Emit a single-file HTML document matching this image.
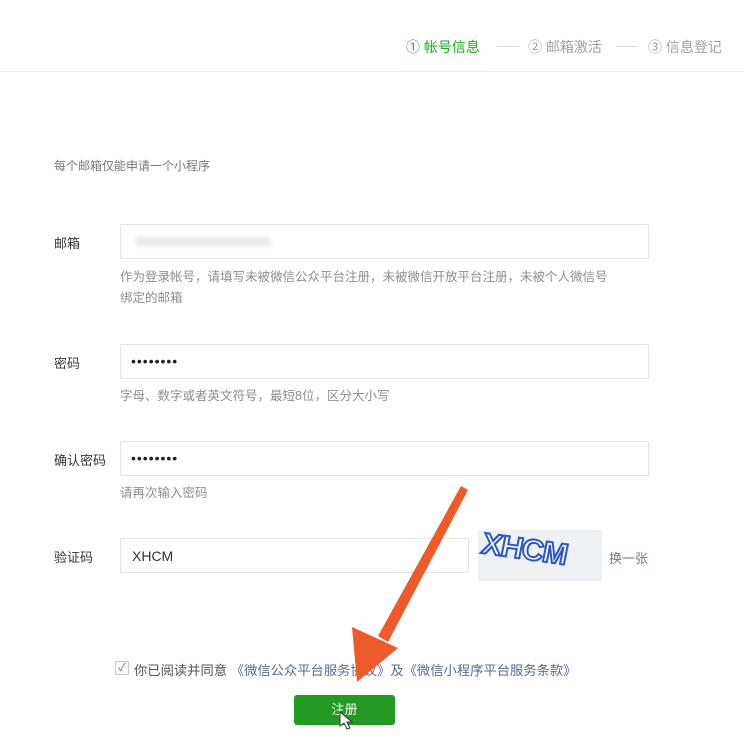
<!DOCTYPE html>
<html><head><meta charset="utf-8"><style>
body{margin:0;width:744px;height:737px;background:#fff;font-family:"Liberation Sans","Noto Sans CJK SC",sans-serif;position:relative;overflow:hidden;color:#353535}
.a{position:absolute;white-space:nowrap}
.lbl{font-size:13px;color:#353535}
.tip{font-size:12px;color:#8d8d8d}
.inp{position:absolute;border:1px solid #e4e4e4;background:#fff;box-sizing:border-box;height:35px;border-radius:2px}
.dots{font-size:14px;letter-spacing:1px;color:#222;position:absolute;left:10px;top:8px}
</style></head><body>
<div class="a" style="left:0;top:71px;width:744px;height:1px;background:#ececec"></div>
<div class="a" style="left:406px;top:37px;font-size:14px;color:#1aad19">①&nbsp;帐号信息</div>
<div class="a" style="left:497px;top:46px;width:22px;height:1px;background:#ddd"></div>
<div class="a" style="left:528px;top:37px;font-size:14px;color:#a0a0a0">②&nbsp;邮箱激活</div>
<div class="a" style="left:616px;top:46px;width:22px;height:1px;background:#ddd"></div>
<div class="a" style="left:648px;top:37px;font-size:14px;color:#a0a0a0">③&nbsp;信息登记</div>

<div class="a tip" style="left:54px;top:157px;color:#777">每个邮箱仅能申请一个小程序</div>

<div class="a lbl" style="left:54px;top:233px">邮箱</div>
<div class="inp" style="left:120px;top:224px;width:529px"><div style="position:absolute;left:14px;top:12px;width:136px;height:9px;background:#e6e8ec;border-radius:4px;filter:blur(2px)"></div></div>
<div class="a tip" style="left:120px;top:266px;font-size:12.5px">作为登录帐号，请填写未被微信公众平台注册，未被微信开放平台注册，未被个人微信号</div>
<div class="a tip" style="left:120px;top:287px;font-size:12.5px">绑定的邮箱</div>

<div class="a lbl" style="left:54px;top:353px">密码</div>
<div class="inp" style="left:120px;top:344px;width:529px"><span class="dots">••••••••</span></div>
<div class="a tip" style="left:120px;top:385px;font-size:12.5px">字母、数字或者英文符号，最短8位，区分大小写</div>

<div class="a lbl" style="left:54px;top:450px">确认密码</div>
<div class="inp" style="left:120px;top:441px;width:529px"><span class="dots">••••••••</span></div>
<div class="a tip" style="left:120px;top:482px;font-size:12.5px">请再次输入密码</div>

<div class="a lbl" style="left:54px;top:547px">验证码</div>
<div class="inp" style="left:120px;top:538px;width:349px"><span style="position:absolute;left:11px;top:9px;font-size:14px;color:#333">XHCM</span></div>
<div class="a" style="left:478px;top:530px;width:124px;height:51px;background:#eef0f3"></div>
<div class="a" style="left:482px;top:533px;font-size:30px;font-style:italic;font-weight:bold;color:#fff;-webkit-text-stroke:2px #2a56c8;letter-spacing:-1px;transform:skewY(8deg)">XHCM</div>
<div class="a" style="left:609px;top:548px;font-size:13px;color:#6a7a99">换一张</div>

<div class="a" style="left:115px;top:661px;width:12px;height:12px;border:1px solid #ccc;font-size:11px;line-height:12px;text-align:center;color:#1aad19">✓</div>
<div class="a" style="left:134px;top:660px;font-size:13.3px;color:#555">你已阅读并同意 <span style="color:#576b95">《微信公众平台服务协议》及《微信小程序平台服务条款》</span></div>

<div class="a" style="left:294px;top:695px;width:101px;height:30px;background:#239a22;border-radius:3px;color:#fff;font-size:13px;text-align:center;line-height:30px">注册</div>

<svg class="a" style="left:0;top:0" width="744" height="737">
<polygon points="461,486 468,490 388,642 378,636" fill="#ee5a2a"/>
<polygon points="352,627 398,648 357,682" fill="#ee5a2a"/>
<path d="M340 712 v14 l4 -3 l3 6 l3 -1 l-3 -6 h5 z" fill="#fff" stroke="#333" stroke-width="1"/>
</svg>
</body></html>
